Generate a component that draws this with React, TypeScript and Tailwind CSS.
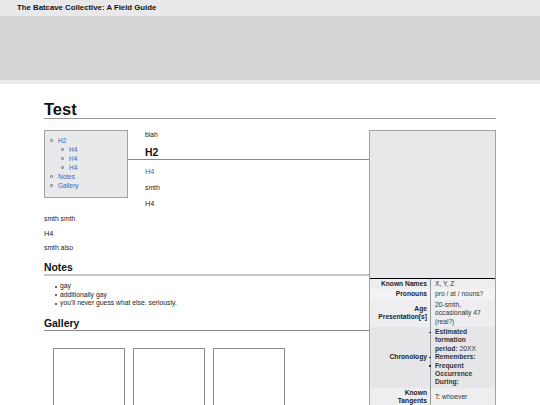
const tocItems = ["H4", "H4", "H4"]

const notes = ["gay", "additionally gay", "you'll never guess what else. seriously."]

function Bullet() {
  return <span className="absolute left-[-6px] top-[3.8px] h-[1.3px] w-[2.2px] bg-[#333]" />
}

function Circle() {
  return (
    <span className="absolute left-[-8px] top-[3px] h-[3.4px] w-[3.4px] rounded-full border-[0.8px] border-[#666]" />
  )
}

function TocLink({ children }: { children: React.ReactNode }) {
  return (
    <li className="relative">
      <Circle />
      <a className="text-[#3366cc]">{children}</a>
    </li>
  )
}

function InfoRow({
  label,
  bg,
  children,
}: {
  label: React.ReactNode
  bg: string
  children: React.ReactNode
}) {
  return (
    <div className={`flex ${bg}`}>
      <div className="flex w-[61px] shrink-0 items-center justify-end border-r border-[#9a9a9a] py-[1px] pl-[6px] pr-[3px] text-right font-bold text-[#222]">
        <span>{label}</span>
      </div>
      <div className="flex-1 py-[1px] pl-[4px] pr-[8px] text-[#333]">{children}</div>
    </div>
  )
}

export default function App() {
  return (
    <div className="min-h-screen bg-white font-['Liberation_Sans',Arial,sans-serif] text-[#222]">
      <header className="h-[16px] bg-[#e9e9eb] pl-[17px] text-[7.8px] font-bold leading-[16px] text-[#111]">
        The Batcave Collective: A Field Guide
      </header>
      <div className="h-[64px] bg-[#d4d4d4]" />
      <div className="h-[4px] bg-[#eaeaea]" />

      <main className="mx-auto w-[452px]">
        <h1 className="mt-[17px] border-b border-[#999] text-[16.5px] font-bold leading-[17px] text-[#111]">
          Test
        </h1>

        <div className="pt-[11px] text-[6.8px] leading-[9px]">
          <aside className="float-right w-[127px] border border-[#a2a2a2] bg-[#e8e8ea] text-[6.7px] leading-[8.4px]">
            <div className="h-[148px] border-b border-black" />
            <InfoRow label="Known Names" bg="bg-[#eeeef0]">
              X, Y, Z
            </InfoRow>
            <InfoRow label="Pronouns" bg="bg-[#f3f3f5]">
              pro / at / nouns?
            </InfoRow>
            <InfoRow label="Age Presentation[s]" bg="bg-[#eeeef0]">
              20-smth, occasionally 47 (real?)
            </InfoRow>
            <InfoRow label="Chronology" bg="bg-[#e6e6e8]">
              <ul>
                <li className="relative">
                  <Bullet />
                  <b>Estimated formation period:</b> 20XX
                </li>
                <li className="relative">
                  <Bullet />
                  <b>Remembers:</b>
                </li>
                <li className="relative">
                  <Bullet />
                  <b>Frequent Occurrence During:</b>
                </li>
              </ul>
            </InfoRow>
            <InfoRow label="Known Tangents" bg="bg-[#eeeef0]">
              <div className="flex h-full items-center">T: whoever</div>
            </InfoRow>
            <div className="h-[20px] bg-[#eeeef0]" />
          </aside>

          <nav className="float-left mb-[8px] mr-[17px] w-[84px] border border-[#a2a2a2] bg-[#e8e9eb] pb-[7px] pt-[5px] text-[6.5px] leading-[9px]">
            <ul className="pl-[13px]">
              <li className="relative">
                <Circle />
                <a className="text-[#3366cc]">H2</a>
                <ul className="pl-[11px]">
                  {tocItems.map((t, i) => (
                    <TocLink key={i}>{t}</TocLink>
                  ))}
                </ul>
              </li>
              <TocLink>Notes</TocLink>
              <TocLink>Gallery</TocLink>
            </ul>
          </nav>

          <p>blah</p>
          <h2 className="mt-[8px] border-b border-[#888] text-[10.4px] font-bold leading-[12px] text-[#111]">H2</h2>
          <h4 className="mt-[7px] text-[7.3px] leading-[9px] text-[#3366cc]">H4</h4>
          <p className="mt-[7px]">smth</p>
          <h4 className="mt-[6.5px] text-[7.3px] leading-[9px]">H4</h4>
          <p className="mt-[6px]">smth smth</p>
          <h4 className="mt-[6px] text-[7.3px] leading-[9px]">H4</h4>
          <p className="mt-[5.5px]">smth also</p>

          <h2 className="mt-[9.5px] border-b-2 border-[#c6c6c6] text-[10.4px] font-bold leading-[12px] text-[#111]">
            Notes
          </h2>
          <ul className="mt-[6.5px] pl-[16px] leading-[8.7px]">
            {notes.map((n) => (
              <li key={n} className="relative">
                <span className="absolute left-[-5.5px] top-[3.6px] h-[2px] w-[2px] rounded-full bg-[#333]" />
                {n}
              </li>
            ))}
          </ul>

          <h2 className="mt-[10px] border-b border-[#888] text-[10.4px] font-bold leading-[12px] text-[#111]">
            Gallery
          </h2>
          <div className="ml-[9px] mt-[17px] flex gap-[8px]">
            <div className="h-[100px] w-[72px] border border-[#8a8a8a]" />
            <div className="h-[100px] w-[72px] border border-[#8a8a8a]" />
            <div className="h-[100px] w-[72px] border border-[#8a8a8a]" />
          </div>
        </div>
      </main>
    </div>
  )
}
